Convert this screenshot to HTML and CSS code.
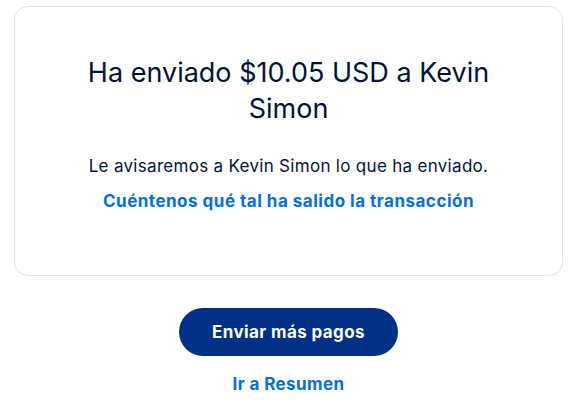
FILE: index.html
```html
<!DOCTYPE html>
<html lang="es">
<head>
<meta charset="utf-8">
<link rel="stylesheet" href="styles.css">
</head>
<body>
<main class="page">
  <section class="card">
    <h1 class="title">Ha enviado $10.05 USD a Kevin Simon</h1>
    <p class="message">Le avisaremos a Kevin Simon lo que ha enviado.</p>
    <a class="feedback" href="#">Cuéntenos qué tal ha salido la transacción</a>
  </section>
  <div class="actions">
    <button class="primary" type="button">Enviar más pagos</button>
    <a class="summary" href="#">Ir a Resumen</a>
  </div>
</main>
</body>
</html>
```
FILE: styles.css
```css
* { box-sizing: border-box; }
html, body { margin: 0; padding: 0; background: #fff; }
body { font-family: Inter, "Noto Sans", sans-serif; color: #001435; }
.page { padding: 6px 18px 0 14px; }
.card {
  border: 1px solid #e3e3e3;
  border-radius: 14px;
  padding: 48px 60px 40px;
  display: flex;
  flex-direction: column;
  align-items: center;
  text-align: center;
  height: 270px;
}
.title {
  margin: 0;
  font-size: 27px;
  font-weight: 400;
  line-height: 36px;
  color: #001435;
  max-width: 430px;
}
.message {
  margin: 28px 0 0;
  font-size: 17px;
  letter-spacing: 0.3px;
  line-height: 22px;
  color: #001435;
}
.feedback {
  margin-top: 14px;
  font-size: 17px;
  letter-spacing: 0.5px;
  font-weight: 700;
  color: #0070e0;
  text-decoration: none;
}
.actions {
  display: flex;
  flex-direction: column;
  align-items: center;
  padding-top: 32px;
}
.primary {
  width: 219px;
  height: 48px;
  border: none;
  border-radius: 24px;
  background: #003087;
  color: #fff;
  font-family: inherit;
  font-size: 17px;
  letter-spacing: 0.4px;
  font-weight: 700;
}
.summary {
  margin-top: 18px;
  font-size: 17px;
  letter-spacing: 0.4px;
  font-weight: 700;
  color: #0070e0;
  text-decoration: none;
}
```
